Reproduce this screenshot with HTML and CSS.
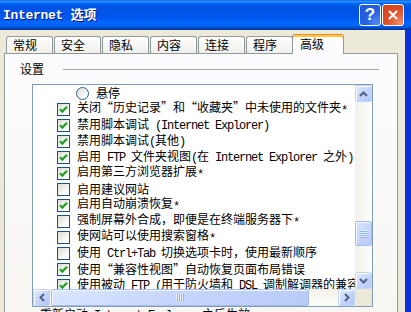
FILE: index.html
```html
<!DOCTYPE html>
<html lang="zh-CN">
<head>
    <meta charset="UTF-8">
    <meta name="viewport" content="width=device-width, initial-scale=1.0">
    <title>Internet 选项</title>
    <link rel="stylesheet" href="styles.css">
</head>
<body>
<div class="window">
    <div class="titlebar">
        <span class="title"><span class="en">Internet </span>选项</span>
        <div class="title-buttons">
            <button class="tbtn help">?</button>
            <button class="tbtn close">
                <svg width="10" height="10" viewBox="0 0 10 10"><path d="M1 1l8 8M9 1l-8 8" stroke="#fff" stroke-width="2"/></svg>
            </button>
        </div>
    </div>

    <div class="dialog">
        <div class="tabs">
            <div class="tab">常规</div>
            <div class="tab">安全</div>
            <div class="tab">隐私</div>
            <div class="tab">内容</div>
            <div class="tab">连接</div>
            <div class="tab">程序</div>
            <div class="tab active">高级</div>
        </div>

        <div class="panel">
            <div class="group-title"><span>设置</span><div class="rule"></div></div>

            <div class="listbox">
                <div class="list">
                    <div class="item sub"><span class="radio"></span><span class="label">悬停</span></div>
                    <div class="item"><span class="check"><svg viewBox="0 0 11 11"><path d="M2 5.2l2.3 2.4L9 2.8" fill="none" stroke="#21a121" stroke-width="2.2"/></svg></span><span class="label">关闭“历史记录”和“收藏夹”中未使用的文件夹<span class="en star">*</span></span></div>
                    <div class="item"><span class="check"><svg viewBox="0 0 11 11"><path d="M2 5.2l2.3 2.4L9 2.8" fill="none" stroke="#21a121" stroke-width="2.2"/></svg></span><span class="label">禁用脚本调试<span class="en"> (Internet Explorer)</span></span></div>
                    <div class="item"><span class="check"><svg viewBox="0 0 11 11"><path d="M2 5.2l2.3 2.4L9 2.8" fill="none" stroke="#21a121" stroke-width="2.2"/></svg></span><span class="label">禁用脚本调试<span class="en">(</span>其他<span class="en">)</span></span></div>
                    <div class="item"><span class="check"><svg viewBox="0 0 11 11"><path d="M2 5.2l2.3 2.4L9 2.8" fill="none" stroke="#21a121" stroke-width="2.2"/></svg></span><span class="label">启用<span class="en"> FTP </span>文件夹视图<span class="en">(</span>在<span class="en"> Internet Explorer </span>之外<span class="en">)</span></span></div>
                    <div class="item"><span class="check"><svg viewBox="0 0 11 11"><path d="M2 5.2l2.3 2.4L9 2.8" fill="none" stroke="#21a121" stroke-width="2.2"/></svg></span><span class="label">启用第三方浏览器扩展<span class="en star">*</span></span></div>
                    <div class="item"><span class="check"></span><span class="label">启用建议网站</span></div>
                    <div class="item"><span class="check"><svg viewBox="0 0 11 11"><path d="M2 5.2l2.3 2.4L9 2.8" fill="none" stroke="#21a121" stroke-width="2.2"/></svg></span><span class="label">启用自动崩溃恢复<span class="en star">*</span></span></div>
                    <div class="item"><span class="check"></span><span class="label">强制屏幕外合成，即便是在终端服务器下<span class="en star">*</span></span></div>
                    <div class="item"><span class="check"></span><span class="label">使网站可以使用搜索窗格<span class="en star">*</span></span></div>
                    <div class="item"><span class="check"></span><span class="label">使用<span class="en"> Ctrl+Tab </span>切换选项卡时，使用最新顺序</span></div>
                    <div class="item"><span class="check"><svg viewBox="0 0 11 11"><path d="M2 5.2l2.3 2.4L9 2.8" fill="none" stroke="#21a121" stroke-width="2.2"/></svg></span><span class="label">使用“兼容性视图”自动恢复页面布局错误</span></div>
                    <div class="item"><span class="check"><svg viewBox="0 0 11 11"><path d="M2 5.2l2.3 2.4L9 2.8" fill="none" stroke="#21a121" stroke-width="2.2"/></svg></span><span class="label">使用被动<span class="en"> FTP (</span>用于防火墙和<span class="en"> DSL </span>调制解调器的兼容性<span class="en">)</span></span></div>
                </div>

                <div class="vscroll">
                    <div class="sb-btn"><svg width="9" height="6" viewBox="0 0 9 6"><path d="M1 5L4.5 1.5 8 5" fill="none" stroke="#4d6185" stroke-width="2"/></svg></div>
                    <div class="thumb v-thumb"><span class="grip"></span></div>
                    <div class="sb-space"></div>
                    <div class="sb-btn"><svg width="9" height="6" viewBox="0 0 9 6"><path d="M1 1L4.5 4.5 8 1" fill="none" stroke="#4d6185" stroke-width="2"/></svg></div>
                </div>
                <div class="hscroll">
                    <div class="sb-btn"><svg width="6" height="9" viewBox="0 0 6 9"><path d="M5 1L1.5 4.5 5 8" fill="none" stroke="#4d6185" stroke-width="2"/></svg></div>
                    <div class="thumb h-thumb"><span class="grip"></span></div>
                    <div class="sb-space"></div>
                    <div class="sb-btn"><svg width="6" height="9" viewBox="0 0 6 9"><path d="M1 1L4.5 4.5 1 8" fill="none" stroke="#4d6185" stroke-width="2"/></svg></div>
                </div>
                <div class="corner"></div>
            </div>

            <p class="note">重新启动<span class="en"> Internet Explorer </span>之后生效</p>
        </div>
    </div>
</div>
</body>
</html>
```

FILE: styles.css
```css
* {
    box-sizing: border-box;
}

body {
    margin: 0;
    width: 411px;
    height: 312px;
    overflow: hidden;
    background: #ece9d8;
    font-family: "Noto Sans CJK SC", sans-serif;
    font-size: 12px;
    color: #000;
}

/* latin runs: half-width like the system font */
.en {
    font-family: "Liberation Mono", monospace;
    letter-spacing: -1.2px;
}

.star {
    vertical-align: -2px;
}

.window {
    width: 411px;
    height: 312px;
    display: flex;
    flex-direction: column;
}

.titlebar {
    height: 30px;
    flex: none;
    display: flex;
    align-items: center;
    justify-content: space-between;
    padding: 0 7px 0 3px;
    color: #fff;
    background: linear-gradient(#0058ee 0%, #3593ff 4%, #288eff 6%, #127dff 8%, #036ffc 10%, #0262ee 14%, #0057e5 20%, #0054e3 24%, #0055eb 56%, #005bf5 66%, #026afe 76%, #0062ef 86%, #0052d6 92%, #0040ab 96%, #003092 100%);
}

.title {
    font-weight: bold;
    font-size: 13px;
    line-height: 16px;
    text-shadow: 1px 1px 0 #0a1883;
}

.title .en {
    letter-spacing: -0.3px;
}

.title-buttons {
    display: flex;
    gap: 1px;
}

.tbtn {
    width: 22px;
    height: 22px;
    padding: 0;
    border: 1px solid #fff;
    border-radius: 3px;
    display: flex;
    align-items: center;
    justify-content: center;
    color: #fff;
}

.help {
    font-family: "Liberation Sans", sans-serif;
    font-weight: bold;
    font-size: 17px;
    background: radial-gradient(circle at 85% 90%, #4e8af5 0%, #2663e0 45%, #1f56d4 100%);
}

.close {
    background: radial-gradient(circle at 85% 90%, #f08a67 0%, #e0542f 45%, #cf3f1b 100%);
}

.dialog {
    flex: none;
    padding: 4px 0 0 4px;
    border-right: 6px solid #0831d9;
    background: #ece9d8;
}

.tabs {
    display: flex;
    align-items: flex-end;
    height: 20px;
    padding-left: 2px;
    margin-bottom: -1px;
    position: relative;
    z-index: 1;
}

.tab {
    width: 47px;
    height: 17px;
    margin: 0 1px 1px 0;
    padding-left: 6px;
    border: 1px solid #919b9c;
    border-bottom: none;
    border-radius: 3px 3px 0 0;
    background: linear-gradient(#fefefe, #f1f0ea);
    line-height: 15px;
}

.tab.active {
    width: 52px;
    height: 20px;
    margin: 0 0 0 -2px;
    padding: 1px 0 0 7px;
    border-top-color: #e68b2c;
    background: #fcfcfe;
    box-shadow: inset 0 2px 0 #ffc83c;
}

.panel {
    width: 394px;
    height: 290px;
    padding: 8px 0 0 15px;
    border: 1px solid #919b9c;
    background: linear-gradient(#fcfcfe, #f7f6f2);
}

.group-title {
    display: flex;
    align-items: center;
    gap: 19px;
    height: 14px;
    line-height: 14px;
    margin-right: 18px;
}

.rule {
    flex: 1;
    height: 1px;
    background: #aca899;
}

.listbox {
    width: 341px;
    height: 223px;
    margin: 8px 0 0 12px;
    border: 1px solid #7f9db9;
    background: #fff;
    display: grid;
    grid-template-columns: 1fr 17px;
    grid-template-rows: 1fr 17px;
}

.list {
    overflow: hidden;
    white-space: nowrap;
}

.item {
    height: 16px;
    display: flex;
    align-items: center;
    padding-left: 24px;
    line-height: 16px;
}

.item.sub {
    padding-left: 43px;
}

.check, .radio {
    width: 13px;
    height: 13px;
    flex: none;
    margin-right: 7px;
    border: 1px solid #1c5180;
    background: linear-gradient(135deg, #dcdcd7, #fdfdfb 80%);
}

.check svg {
    display: block;
    width: 11px;
    height: 11px;
}

.radio {
    border-radius: 50%;
    border-color: #2e5d8e;
}

.vscroll {
    display: flex;
    flex-direction: column;
    background: linear-gradient(to right, #f2f1eb, #fefefb);
}

.hscroll {
    display: flex;
    background: linear-gradient(#f2f1eb, #fefefb);
}

.sb-btn {
    width: 17px;
    height: 17px;
    flex: none;
    border: 1px solid #c3d3f8;
    border-radius: 2px;
    display: flex;
    align-items: center;
    justify-content: center;
    background: linear-gradient(135deg, #e3ebfe 0%, #c6d6fc 50%, #b4c8f6 100%);
    box-shadow: inset 1px 1px 0 #fff;
}

.sb-space {
    flex: 1;
}

.thumb {
    flex: none;
    border: 1px solid #a8bbe8;
    border-radius: 2px;
    display: flex;
    align-items: center;
    justify-content: center;
    background: linear-gradient(135deg, #dbe6fe 0%, #c5d5fc 50%, #b8cbf8 100%);
    box-shadow: inset 1px 1px 0 #f2f6ff;
}

.v-thumb {
    height: 25px;
    margin-top: 119px;
}

.h-thumb {
    width: 258px;
    margin-left: 1px;
}

.v-thumb .grip {
    width: 7px;
    height: 8px;
    background: repeating-linear-gradient(#eef4fe 0 1px, #8cb0f8 1px 2px);
}

.h-thumb .grip {
    width: 8px;
    height: 7px;
    background: repeating-linear-gradient(to right, #eef4fe 0 1px, #8cb0f8 1px 2px);
}

.corner {
    background: #ece9d8;
}

.note {
    margin: 0 0 0 20px;
    line-height: 14px;
}
```
